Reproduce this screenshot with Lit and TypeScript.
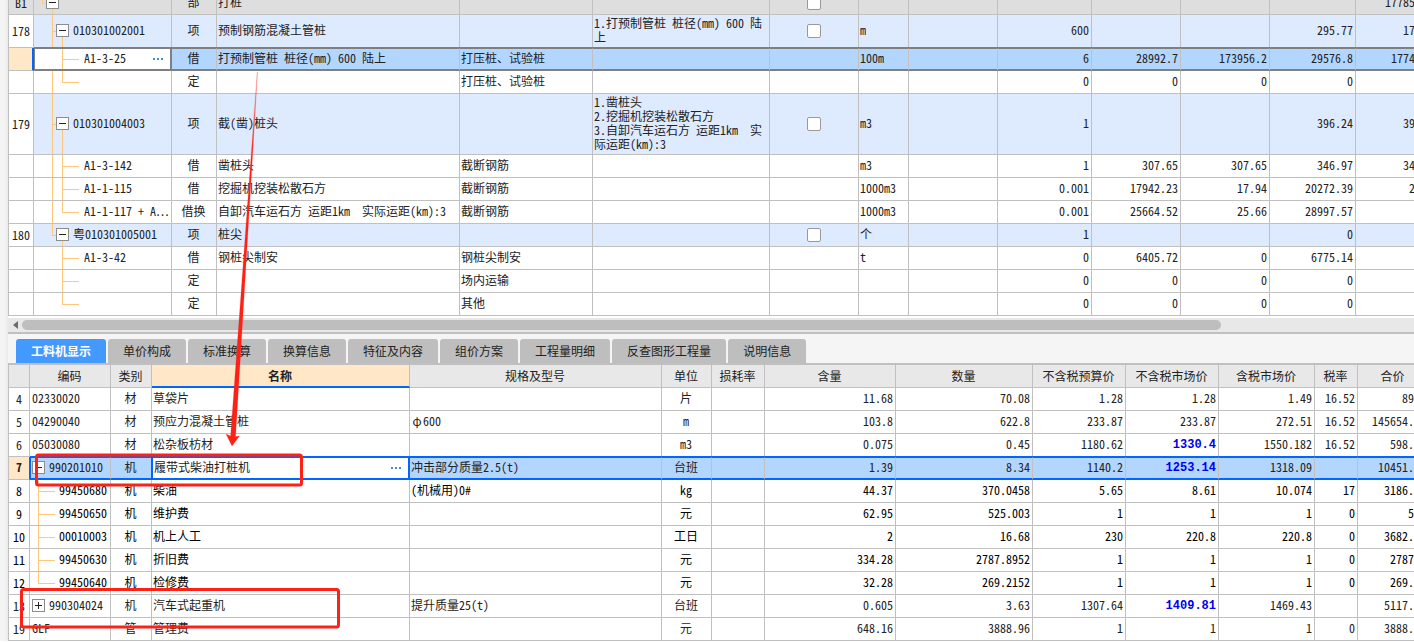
import { LitElement, html, svg, css, nothing, TemplateResult } from "lit";
import { customElement, property } from "lit/decorators.js";

interface Row {
  no?: string;
  kind?: string;
  guide?: string;
  toggle?: "minus" | "plus";
  code?: string;
  more?: boolean;
  cells: (string | TemplateResult)[];
  check?: boolean;
}

const BILL_COLUMNS = [26, 138, 45, 243, 133, 177, 89, 50, 89, 94, 89, 89, 86, 86];
const BILL_ALIGN = ["c", "l", "l", "l", "c", "l", "l", "r", "r", "r", "r", "r"];

const BILL_ROWS: Row[] = [
  { no: "B1", kind: "part", guide: "g-root", toggle: "minus", cells: ["部", "打桩", "", "", "", "", "", "", "", "", "", "177858.24"], check: true },
  { no: "178", kind: "item", guide: "g-item", toggle: "minus", code: "010301002001", cells: ["项", "预制钢筋混凝土管桩", "", "1.打预制管桩 桩径(mm) 600 陆\n上", "", "m", "", "600", "", "", "295.77", "177462"], check: true },
  { kind: "selected", guide: "g-leaf", code: "A1-3-25", more: true, cells: ["借", "打预制管桩 桩径(mm) 600 陆上", "打压桩、试验桩", "", "", "100m", "", "6", "28992.7", "173956.2", "29576.8", "177460.8"] },
  { guide: "g-leaf-end g-through", cells: ["定", "", "打压桩、试验桩", "", "", "", "", "0", "0", "0", "0", "0"] },
  { no: "179", kind: "item", guide: "g-item", toggle: "minus", code: "010301004003", cells: ["项", "截(凿)桩头", "", "1.凿桩头\n2.挖掘机挖装松散石方\n3.自卸汽车运石方 运距1km  实\n际运距(km):3", "", "m3", "", "1", "", "", "396.24", "396.24"], check: true },
  { guide: "g-leaf g-through", code: "A1-3-142", cells: ["借", "凿桩头", "截断钢筋", "", "", "m3", "", "1", "307.65", "307.65", "346.97", "346.97"] },
  { guide: "g-leaf g-through", code: "A1-1-115", cells: ["借", "挖掘机挖装松散石方", "截断钢筋", "", "", "1000m3", "", "0.001", "17942.23", "17.94", "20272.39", "20.27"] },
  { guide: "g-leaf-end g-through", code: "A1-1-117 + A⋯", cells: ["借换", "自卸汽车运石方 运距1km  实际运距(km):3", "截断钢筋", "", "", "1000m3", "", "0.001", "25664.52", "25.66", "28997.57", "29"] },
  { no: "180", kind: "item", guide: "g-item-end", toggle: "minus", code: "粤010301005001", cells: ["项", "桩尖", "", "", "", "个", "", "1", "", "", "0", "0"], check: true },
  { guide: "g-leaf", code: "A1-3-42", cells: ["借", "钢桩尖制安", "钢桩尖制安", "", "", "t", "", "0", "6405.72", "0", "6775.14", "0"] },
  { guide: "g-leaf", cells: ["定", "", "场内运输", "", "", "", "", "0", "0", "0", "0", "0"] },
  { guide: "g-leaf-end", cells: ["定", "", "其他", "", "", "", "", "0", "0", "0", "0", "0"] },
];

const TABS = ["工料机显示", "单价构成", "标准换算", "换算信息", "特征及内容", "组价方案", "工程量明细", "反查图形工程量", "说明信息"];

const COST_COLUMNS = [22, 81, 41, 258, 252, 50, 53, 131, 137, 93, 93, 96, 43, 71];
const COST_HEAD = ["", "编码", "类别", "名称", "规格及型号", "单位", "损耗率", "含量", "数量", "不含税预算价", "不含税市场价", "含税市场价", "税率", "合价"];
const COST_ALIGN = ["c", "l", "l", "c", "r", "r", "r", "r", "r", "r", "r", "r"];
const PRICE = 8;

const COST_ROWS: Row[] = [
  { no: "4", code: "02330020", cells: ["材", "草袋片", "", "片", "", "11.68", "70.08", "1.28", "1.28", "1.49", "16.52", "89.7"] },
  { no: "5", code: "04290040", cells: ["材", "预应力混凝土管桩", html`<span class="wide">φ</span>600`, "m", "", "103.8", "622.8", "233.87", "233.87", "272.51", "16.52", "145654.24"] },
  { no: "6", kind: "priced", code: "05030080", cells: ["材", "松杂板枋材", "", "m3", "", "0.075", "0.45", "1180.62", "1330.4", "1550.182", "16.52", "598.68"] },
  { no: "7", kind: "priced selected", guide: "n-open", toggle: "minus", code: "990201010", more: true, cells: ["机", "履带式柴油打桩机", "冲击部分质量2.5(t)", "台班", "", "1.39", "8.34", "1140.2", "1253.14", "1318.09", "", "10451.19"] },
  { no: "8", kind: "child", guide: "n-leaf", code: "99450680", cells: ["机", "柴油", "(机械用)0#", "kg", "", "44.37", "370.0458", "5.65", "8.61", "10.074", "17", "3186.09"] },
  { no: "9", kind: "child", guide: "n-leaf", code: "99450650", cells: ["机", "维护费", "", "元", "", "62.95", "525.003", "1", "1", "1", "0", "525"] },
  { no: "10", kind: "child", guide: "n-leaf", code: "00010003", cells: ["机", "机上人工", "", "工日", "", "2", "16.68", "230", "220.8", "220.8", "0", "3682.94"] },
  { no: "11", kind: "child", guide: "n-leaf", code: "99450630", cells: ["机", "折旧费", "", "元", "", "334.28", "2787.8952", "1", "1", "1", "0", "2787.9"] },
  { no: "12", kind: "child", guide: "n-leaf-end", code: "99450640", cells: ["机", "检修费", "", "元", "", "32.28", "269.2152", "1", "1", "1", "0", "269.22"] },
  { no: "13", kind: "priced", guide: "n-open", toggle: "plus", code: "990304024", cells: ["机", "汽车式起重机", "提升质量25(t)", "台班", "", "0.605", "3.63", "1307.64", "1409.81", "1469.43", "", "5117.61"] },
  { no: "19", code: "GLF", cells: ["管", "管理费", "", "元", "", "648.16", "3888.96", "1", "1", "1", "0", "3888.96"] },
];

const gridStyles = css`
  :host {
    display: block;
    overflow: hidden;
  }
  table {
    border-collapse: separate;
    border-spacing: 0;
    table-layout: fixed;
    background: #fff;
  }
  td,
  th {
    box-sizing: border-box;
    height: 23px;
    padding: 1px 2px 3px 1px;
    border: 0 solid #c0c0c0;
    border-right-width: 1px;
    border-bottom-width: 1px;
    line-height: 14px;
    font-weight: 400;
    white-space: pre;
    overflow: hidden;
    text-align: left;
    vertical-align: middle;
  }
  th {
    padding: 2px 2px 2px 1px;
  }
  .no,
  .tick {
    padding: 2px 0;
    text-align: center;
  }
  .no {
    border-left-width: 1px;
    background: #fff;
  }
  .c {
    text-align: center;
  }
  .r {
    text-align: right;
  }
  .tree {
    background-repeat: no-repeat;
    padding-left: 2px;
  }
  .node {
    display: flex;
    align-items: center;
    gap: 4px;
  }
  .toggle {
    flex: none;
    width: 13px;
    height: 13px;
    padding: 0;
    border: 1px solid #8c8c8c;
    background: #fff;
    display: grid;
    place-items: center;
  }
  .more {
    flex: none;
    margin-left: auto;
    margin-right: 3px;
    width: 14px;
    height: 14px;
    padding: 0;
    border: 0;
    background: none;
    display: grid;
    place-items: center;
    white-space: normal;
  }
  svg {
    display: block;
  }
`;

const toggleButton = (kind: "minus" | "plus") => html`
  <button class="toggle" aria-label=${kind === "minus" ? "收起" : "展开"}>
    <svg width="11" height="11" viewBox="0 0 11 11" shape-rendering="crispEdges">
      <path d=${kind === "minus" ? "M2 5h7v1H2z" : "M2 5h7v1H2zM5 2h1v7H5z"} fill="#222" />
    </svg>
  </button>
`;

const moreButton = html`
  <button class="more" aria-label="更多">
    <svg width="14" height="14" viewBox="0 0 14 14" shape-rendering="crispEdges">
      <path d="M2 7h2v2H2zM6 7h2v2H6zM10 7h2v2h-2z" fill="#3e8ed6" />
    </svg>
  </button>
`;

const columns = (widths: number[]) => html`
  <colgroup>${widths.map((w) => html`<col style="width:${w}px" />`)}</colgroup>
`;

@customElement("bill-grid")
export class BillGrid extends LitElement {
  static styles = [
    gridStyles,
    css`
      table {
        width: max(100%, 1434px);
        margin-top: -8px;
      }
      .part td {
        background-color: #dedede;
      }
      .item td {
        background-color: #deeafe;
      }
      .item .no {
        background-color: #fff;
      }
      .selected td {
        background-color: #b3d6ff;
        border-top: 1px solid #7f7f7f;
        border-bottom: 2px solid #7f7f7f;
        box-shadow: 0 -1px #7f7f7f;
        padding-top: 0;
        padding-bottom: 2px;
      }
      .selected .no {
        background-color: #ffe7c8;
        border-top: 0;
        border-bottom: 1px solid #c0c0c0;
        border-right: 2px solid #0066ff;
        box-shadow: none;
      }
      .selected .tree {
        background-color: #fff;
        border-right: 2px solid #7f7f7f;
        border-left: 1px solid #7f7f7f;
      }
      .node {
        padding-left: 48px;
      }
      .item .node {
        padding-left: 20px;
      }
      .part .node {
        padding-left: 10px;
      }
      .selected .node {
        padding-left: 47px;
      }
      .tree {
        --line: linear-gradient(#ffc77a, #ffc77a);
      }
      .g-root {
        background-image: var(--line), var(--line), var(--line);
        background-size: 1px 50%, 4px 1px, 1px 50%;
        background-position: 8px 0, 8px 50%, 18px 100%;
      }
      .g-item,
      .g-item-end {
        background-image: var(--line), var(--line), var(--line);
        background-size: 1px 100%, 4px 1px, 1px 50%;
        background-position: 18px 0, 18px 50%, 28px 100%;
      }
      .g-item-end {
        background-size: 1px 50%, 4px 1px, 1px 50%;
      }
      .g-leaf,
      .g-leaf-end {
        background-image: var(--line), var(--line);
        background-size: 1px 100%, 17px 1px;
        background-position: 28px 0, 28px 50%;
      }
      .g-leaf-end {
        background-size: 1px 50%, 17px 1px;
      }
      .g-through {
        background-image: var(--line), var(--line), var(--line);
        background-size: 1px 100%, 17px 1px, 1px 100%;
        background-position: 28px 0, 28px 50%, 18px 0;
      }
      .g-leaf-end.g-through {
        background-size: 1px 50%, 17px 1px, 1px 100%;
      }
      .selected .g-leaf {
        background-position: 27px 0, 27px 50%;
      }
      .check {
        appearance: none;
        display: block;
        box-sizing: border-box;
        width: 14px;
        height: 14px;
        margin: 0 auto;
        border: 1px solid #999;
        border-radius: 2px;
        background: #fff;
      }
    `,
  ];

  @property({ attribute: false }) rows: Row[] = [];

  render() {
    return html`
      <table>
        ${columns(BILL_COLUMNS)}
        <tbody>
          ${this.rows.map(
            (row) => html`
              <tr class=${row.kind ?? ""}>
                <td class="no">${row.no ?? ""}</td>
                <td class="tree ${row.guide ?? ""}"><div class="node">${row.toggle ? toggleButton(row.toggle) : nothing}<span>${row.code ?? ""}</span>${row.more ? moreButton : nothing}</div></td>
                ${row.cells.map((text, i) =>
                  i === 4 && row.check
                    ? html`<td class="tick"><input class="check" type="checkbox" aria-label=${row.no ?? ""} /></td>`
                    : html`<td class=${BILL_ALIGN[i]}>${text}</td>`
                )}
              </tr>
            `
          )}
        </tbody>
      </table>
    `;
  }
}

@customElement("cost-grid")
export class CostGrid extends LitElement {
  static styles = [
    gridStyles,
    css`
      table {
        width: max(100%, 1421px);
      }
      th {
        background: #e8e8e8;
        text-align: center;
      }
      th.no {
        background: #e8e8e8;
      }
      th.current {
        background: #ffe7c8;
        border-bottom: 2px solid #0066ff;
        font-weight: 700;
      }
      .wide {
        display: inline-block;
        width: 12px;
        text-align: center;
        font-feature-settings: normal;
      }
      .child {
        color: #000;
      }
      .n-leaf,
      .n-leaf-end {
        --line: linear-gradient(#ffc77a, #ffc77a);
        background-image: var(--line), var(--line);
        background-size: 1px 100%, 17px 1px;
        background-position: 8px 0, 8px 50%;
      }
      .n-leaf-end {
        background-size: 1px 50%, 17px 1px;
      }
      .child .node {
        padding-left: 27px;
      }
      .priced .price {
        color: #0000f0;
        font: bold 12px/14px "Liberation Mono", monospace;
        font-feature-settings: normal;
        padding-top: 2px;
        padding-bottom: 2px;
      }
      .selected td {
        background-color: #b3d6ff;
        border-top: 1px solid #0066ff;
        border-bottom: 2px solid #0066ff;
        box-shadow: 0 -1px #0066ff;
        padding-top: 0;
        padding-bottom: 2px;
      }
      .selected .no {
        background-color: #ffe7c8;
        border-top: 0;
        border-bottom: 1px solid #c0c0c0;
        border-right-color: #0066ff;
        box-shadow: none;
        font-weight: 700;
      }
      .selected .price {
        padding-top: 1px;
        padding-bottom: 1px;
      }
      .selected .tree {
        border-left: 1px solid #0066ff;
        padding-left: 1px;
      }
      .selected .kind {
        border-right-color: #0066ff;
      }
      .selected .name {
        background: #fff;
        border-left: 1px solid #0066ff;
        border-right: 2px solid #0066ff;
      }
    `,
  ];

  @property({ attribute: false }) rows: Row[] = [];

  private cellClass(i: number) {
    const role = i === 0 ? "kind" : i === 1 ? "name" : i === PRICE ? "price" : "";
    return `${COST_ALIGN[i]} ${role}`;
  }

  render() {
    return html`
      <table>
        ${columns(COST_COLUMNS)}
        <thead>
          <tr>
            ${COST_HEAD.map((text, i) => html`<th scope="col" class=${i === 0 ? "no" : i === 3 ? "current" : ""}>${text}</th>`)}
          </tr>
        </thead>
        <tbody>
          ${this.rows.map(
            (row) => html`
              <tr class=${row.kind ?? ""}>
                <td class="no">${row.no ?? ""}</td>
                <td class="tree ${row.guide ?? ""}"><div class="node">${row.toggle ? toggleButton(row.toggle) : nothing}<span>${row.code ?? ""}</span></div></td>
                ${row.cells.map((text, i) =>
                  i === 1 && row.more
                    ? html`<td class=${this.cellClass(i)}><div class="node"><span>${text}</span>${moreButton}</div></td>`
                    : html`<td class=${this.cellClass(i)}>${text}</td>`
                )}
              </tr>
            `
          )}
        </tbody>
      </table>
    `;
  }
}

@customElement("app-root")
export class AppRoot extends LitElement {
  static styles = css`
    :host {
      display: block;
      position: relative;
      overflow: hidden;
      border-left: 6px solid #f4f4f4;
      padding-left: 2px;
      background: #ededed;
      color: #222;
      font: 12px/14px "Noto Sans CJK SC", "Noto Sans CJK TC", sans-serif;
      font-feature-settings: "hwid" 1;
    }
    .scrollbar {
      display: flex;
      align-items: center;
      height: 14px;
      border-top: 2px solid #fff;
      border-bottom: 2px solid #c0c0c0;
      background: #e8e8e8;
    }
    .arrow {
      flex: none;
      width: 14px;
      height: 14px;
      padding: 0;
      border: 0;
      background: none;
      display: grid;
      place-items: center;
    }
    .track {
      flex: 1;
    }
    .thumb {
      height: 10px;
      border-radius: 5px;
      background: #bebebe;
    }
    .tabs {
      display: flex;
      gap: 2px;
      padding: 5px 8px 0;
      background: #f5f5f5;
      border-bottom: 2px solid #c0c0c0;
    }
    .tab {
      height: 24px;
      padding: 0 15px;
      border: 0;
      border-radius: 3px 3px 0 0;
      background: #bebebe;
      color: #222;
      font: inherit;
      white-space: nowrap;
    }
    .tab.active {
      background: #4499ff;
      color: #fff;
      font-weight: 700;
    }
    .marks {
      position: absolute;
      top: 0;
      left: -6px;
      pointer-events: none;
    }
  `;

  render() {
    return html`
      <bill-grid .rows=${BILL_ROWS}></bill-grid>
      <div class="scrollbar">
        <button class="arrow" aria-label="向左滚动">
          <svg width="5" height="8" viewBox="0 0 5 8"><path d="M5 0v8L0 4z" fill="#6b6b76" /></svg>
        </button>
        <div class="track"><div class="thumb" style="width:86.1%"></div></div>
      </div>
      <div class="tabs" role="tablist">
        ${TABS.map((tab, i) => html`<button role="tab" aria-selected=${i === 0 ? "true" : "false"} class="tab ${i === 0 ? "active" : ""}">${tab}</button>`)}
      </div>
      <cost-grid .rows=${COST_ROWS}></cost-grid>
      <svg class="marks" width="360" height="640" viewBox="0 0 360 640" aria-hidden="true">
        ${svg`
          <defs>
            <linearGradient id="fade" gradientUnits="userSpaceOnUse" x1="257" y1="70" x2="250" y2="160">
              <stop offset="0" stop-color="#ff2116" stop-opacity="0.3" />
              <stop offset="1" stop-color="#ff2116" />
            </linearGradient>
          </defs>
          <path d="M257.6 72L257.2 72L230.6 436L226 434L232 446L239.5 436L235.6 436.500Z" fill="url(#fade)" stroke="#ff2116" stroke-opacity="0.3" stroke-width="0.6" stroke-linejoin="round" />
          <g fill="none" stroke="#ff2116" stroke-width="3">
            <rect x="36.500" y="455" width="265" height="30" rx="2" />
            <rect x="21.500" y="589.500" width="317" height="37.500" rx="2" />
          </g>
        `}
      </svg>
    `;
  }
}
